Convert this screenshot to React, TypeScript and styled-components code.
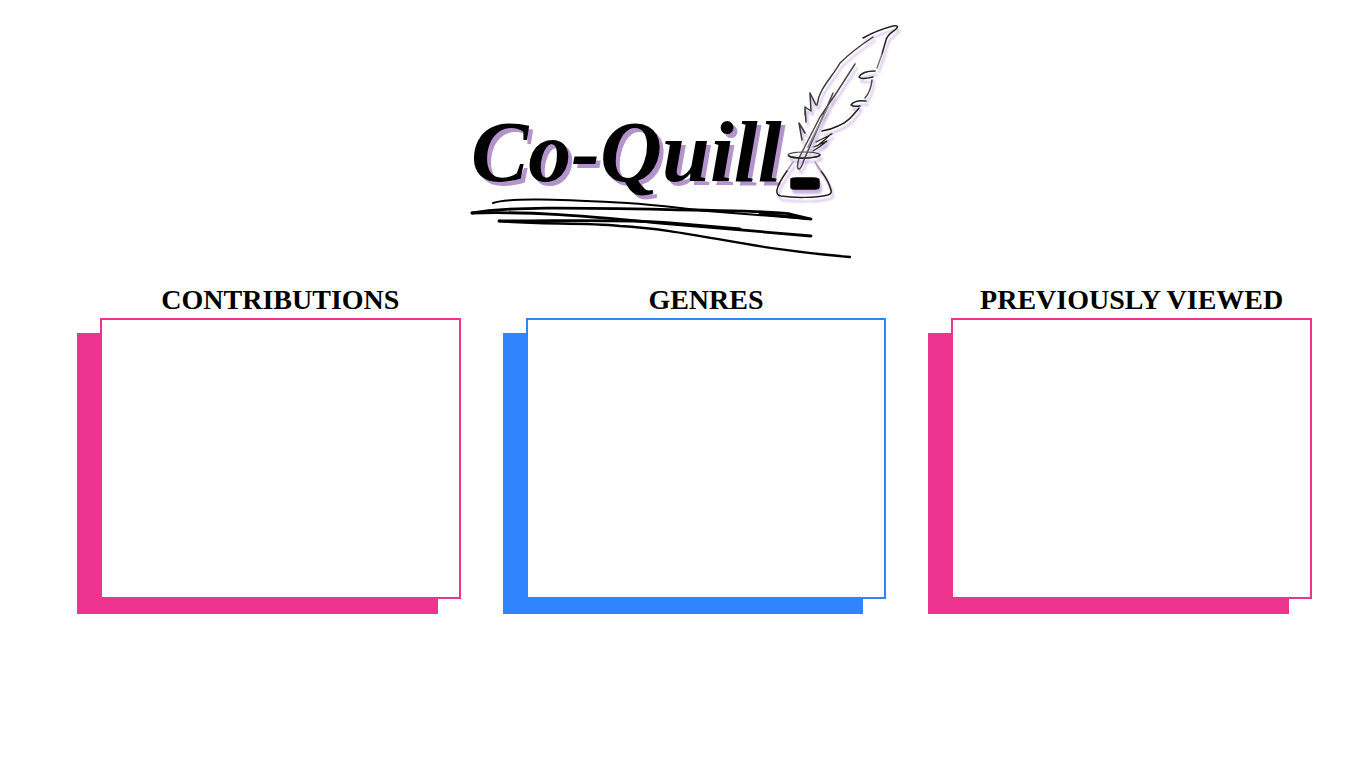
import React from "react";
import styled, { createGlobalStyle } from "styled-components";

const GlobalStyle = createGlobalStyle`
  body {
    margin: 0;
    background: #ffffff;
    color: #000000;
    font-family: "Liberation Serif", "Times New Roman", serif;
  }
`;

const Page = styled.div`
  display: flex;
  flex-direction: column;
  min-height: 100vh;
`;

const Header = styled.header`
  display: flex;
  justify-content: center;
  padding: 16px 16px 0;
`;

const Logo = styled.svg`
  display: block;
  width: 440px;
  max-width: 100%;
  height: auto;
`;

const Wordmark = styled.text`
  font-family: "Liberation Serif", "Times New Roman", serif;
  font-size: 86px;
  font-weight: 700;
  font-style: italic;
  fill: #000000;
  filter: drop-shadow(4px 4px 0 #b393cb);
`;

const Drawing = styled.g`
  fill: none;
  stroke: #222222;
  stroke-width: 1.5;
  stroke-linecap: round;
  stroke-linejoin: round;
  filter: drop-shadow(2px 4px 1px #c9b0e0);
`;

const Underlines = styled.g`
  fill: none;
  stroke: #000000;
  stroke-width: 2.8;
  stroke-linecap: round;
  stroke-linejoin: round;
`;

const Sections = styled.main`
  display: grid;
  grid-template-columns: repeat(3, minmax(0, 1fr));
  gap: 42px;
  padding: 18px 54px 40px 77px;
`;

const Section = styled.section`
  padding-left: 23px;
`;

const Title = styled.h2`
  margin: 0 0 2px;
  font-size: 28px;
  line-height: 32px;
  font-weight: 700;
  text-align: center;
  white-space: nowrap;
`;

const Frame = styled.div<{ $color: string }>`
  box-sizing: border-box;
  aspect-ratio: 361 / 281;
  border: 2px solid ${(p) => p.$color};
  background: #ffffff;
  box-shadow: -23px 15px 0 ${(p) => p.$color};
`;

const PINK = "#ed358f";
const BLUE = "#3185fc";

const sections = [
  { title: "CONTRIBUTIONS", color: PINK },
  { title: "GENRES", color: BLUE },
  { title: "PREVIOUSLY VIEWED", color: PINK },
];

function CoQuillLogo() {
  return (
    <Logo viewBox="463 16 440 250" role="img" aria-label="Co-Quill">
      <Wordmark x="471" y="181">Co-Quill</Wordmark>

      <Drawing>
        {/* feather: top edge and tip */}
        <path d="M863 38C872 33 885 28 893 26Q900 25 896 29C891 33 887 35 886 40L882 54" />
        <path d="M882 54L877 68" stroke="#777777" />
        <path d="M873 37C861 45 850 53 840 63C835 72 827 81 822 90Q818 97 817 105" stroke="#3c3c3c" />
        {/* feather: jagged left edge */}
        <path d="M816 105L810 93L811 111L805 107L806 122M805 107L805 115M805 133L799 123L802 140" stroke="#3c3c3c" />
        {/* feather: notched right edge */}
        <path d="M875 71C868 71 861 73 859 77Q861 80 873 77" />
        <path d="M872 80Q871 91 865 98" stroke="#4a4a4a" />
        <path d="M866 101C858 100 853 102 851 105Q853 107 860 106" />
        <path d="M859 108C851 118 846 123 838 126Q830 130 822 131" />
        {/* shaft and nib */}
        <path d="M855 64L837 92L820 117L799 158Q796 169 799 169Q801 169 804 160L823 116L833 93" stroke="#4a4a4a" />
        <path d="M828 107L808 147" stroke="#888888" />
        {/* lower barbs */}
        <path d="M832 134L816 142M831 134Q825 140 817 146M827 141L814 147M827 141Q820 147 813 151" strokeWidth="1.2" />
        {/* ink bottle */}
        <ellipse cx="804" cy="155" rx="16" ry="3" stroke="#4a4a4a" strokeWidth="1.2" />
        <path d="M789 156C794 159 815 159 820 155" />
        <path d="M793 162L787 171" stroke="#999999" />
        <path d="M787 171C782 178 778 184 777 190Q776 195 781 196C794 198 815 198 828 195Q832 194 831 190C829 183 825 176 821 171" />
        <path d="M821 171L815 162" stroke="#999999" />
        <path d="M791 179Q792 178 797 178H813Q819 178 819 180V187Q819 189 815 189H794Q791 189 791 187Z" fill="#000000" stroke="#000000" />
      </Drawing>

      <Underlines>
        <path d="M493 203C511 197 565 200 627 203C661 205 684 209 707 211L811 219" strokeWidth="2" />
        <path d="M472 213C509 206 583 208 693 210C732 211 773 211 790 214L811 219L760 214" />
        <path d="M472 213C550 211 612 219 660 223L811 236" />
        <path d="M499 221C570 221 624 219 670 223L740 229" />
        <path d="M499 221C539 225 580 222 620 226C692 230 746 249 850 257" strokeWidth="2.3" />
      </Underlines>
    </Logo>
  );
}

export default function App() {
  return (
    <>
      <GlobalStyle />
      <Page>
        <Header>
          <CoQuillLogo />
        </Header>
        <Sections>
          {sections.map((s) => (
            <Section key={s.title}>
              <Title>{s.title}</Title>
              <Frame $color={s.color} />
            </Section>
          ))}
        </Sections>
      </Page>
    </>
  );
}
